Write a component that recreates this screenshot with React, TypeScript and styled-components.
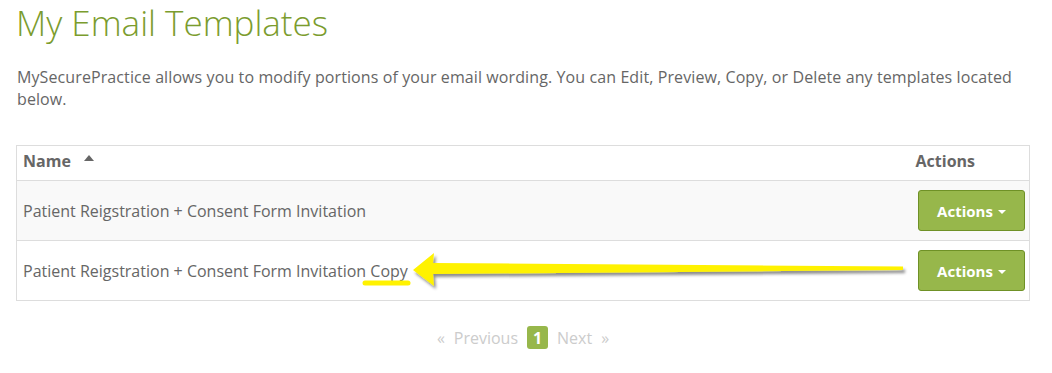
import styled, { createGlobalStyle } from 'styled-components'

const GlobalStyle = createGlobalStyle`
	body {
		margin: 0;
		background: #fff;
		font-family: "Open Sans", "Lato", sans-serif;
		color: #666;
	}
`

type Template = {
	name: string
}

const templates: Template[] = [
	{name: 'Patient Reigstration + Consent Form Invitation'},
	{name: 'Patient Reigstration + Consent Form Invitation Copy'},
]

export default function App () {
	return <Page>
		<GlobalStyle />
		<Title>My Email Templates</Title>
		<Intro>
			MySecurePractice allows you to modify portions of your email wording. You can Edit, Preview, Copy, or Delete any templates located below.
		</Intro>
		<Table>
			<thead>
				<tr>
					<HeadCell>Name <SortCaret /></HeadCell>
					<HeadCell $right>Actions</HeadCell>
				</tr>
			</thead>
			<tbody>
				{templates.map((t, i) => <Row key={i} $striped={i % 2 === 0}>
					<Cell>{t.name}</Cell>
					<Cell $right>
						<ActionButton>Actions <Caret /></ActionButton>
					</Cell>
				</Row>)}
			</tbody>
		</Table>
		<Pager>
			<PagerLink>«</PagerLink>
			<PagerLink>Previous</PagerLink>
			<PageBadge>1</PageBadge>
			<PagerLink>Next</PagerLink>
			<PagerLink>»</PagerLink>
		</Pager>
		<Annotation width="1052" height="373" viewBox="0 0 1052 373">
			<defs>
				<filter id="shadow" x="-5%" y="-50%" width="110%" height="200%">
					<feDropShadow dx="2" dy="3" stdDeviation="1.5" floodColor="#000" floodOpacity="0.45" />
				</filter>
			</defs>
			<path
				d="M413 270 L434 253 L433 263 L903 266.5 L903 270 L433 274 L434 286 Z"
				fill="#fff200"
				filter="url(#shadow)"
			/>
			<line x1="365" y1="283" x2="408" y2="283" stroke="#fff200" strokeWidth="5" strokeLinecap="round" />
		</Annotation>
	</Page>
}

const Page = styled.div`
	position: relative;
	padding: 0 22px 0 16px;
	height: 373px;
	box-sizing: border-box;
	overflow: hidden;
`

const Title = styled.h1`
	margin: 0;
	padding-top: 3px;
	font-size: 35px;
	font-weight: 300;
	color: #7b9c2e;
	line-height: 40px;
`

const Intro = styled.p`
	margin: 23px 0 0 1px;
	font-size: 16px;
	line-height: 22px;
	letter-spacing: 0.1px;
	color: #666;
`

const Table = styled.table`
	margin-top: 35px;
	width: 100%;
	border-collapse: collapse;
	border: 1px solid #ddd;
	font-size: 16px;
`

const HeadCell = styled.th<{$right?: boolean}>`
	text-align: ${props => props.$right ? 'right' : 'left'};
	padding: 4px ${props => props.$right ? '54px' : '6px'} 8px 6px;
	height: 21px;
	font-weight: 700;
	color: #666;
	border-bottom: 1px solid #ddd;
`

const SortCaret = styled.span`
	display: inline-block;
	margin-left: 9px;
	vertical-align: 6px;
	border-left: 5px solid transparent;
	border-right: 5px solid transparent;
	border-bottom: 6px solid #666;
`

const Row = styled.tr<{$striped: boolean}>`
	background: ${props => props.$striped ? '#f9f9f9' : '#fff'};
	border-bottom: 1px solid #ddd;
`

const Cell = styled.td<{$right?: boolean}>`
	height: 59px;
	padding: 0 ${props => props.$right ? '4px' : '6px'} 0 6px;
	text-align: ${props => props.$right ? 'right' : 'left'};
	color: #666;
	vertical-align: middle;
`

const ActionButton = styled.button`
	display: inline-flex;
	align-items: center;
	justify-content: center;
	gap: 5px;
	width: 107px;
	height: 41px;
	padding: 0;
	background: #97b74b;
	border: 1px solid #6f9126;
	border-radius: 3px;
	color: #fff;
	font-family: inherit;
	font-size: 15px;
	font-weight: 700;
`

const Caret = styled.span`
	display: inline-block;
	margin-top: 2px;
	border-left: 4px solid transparent;
	border-right: 4px solid transparent;
	border-top: 4px solid #fff;
`

const Pager = styled.div`
	display: flex;
	justify-content: center;
	align-items: center;
	gap: 9px;
	margin-top: 25px;
	font-size: 16px;
`

const PagerLink = styled.span`
	color: #ccc;
`

const PageBadge = styled.span`
	display: inline-flex;
	align-items: center;
	justify-content: center;
	width: 21px;
	height: 23px;
	border-radius: 3px;
	background: #97b74b;
	color: #fff;
	font-weight: 700;
`

const Annotation = styled.svg`
	position: absolute;
	left: 0;
	top: 0;
	pointer-events: none;
`
